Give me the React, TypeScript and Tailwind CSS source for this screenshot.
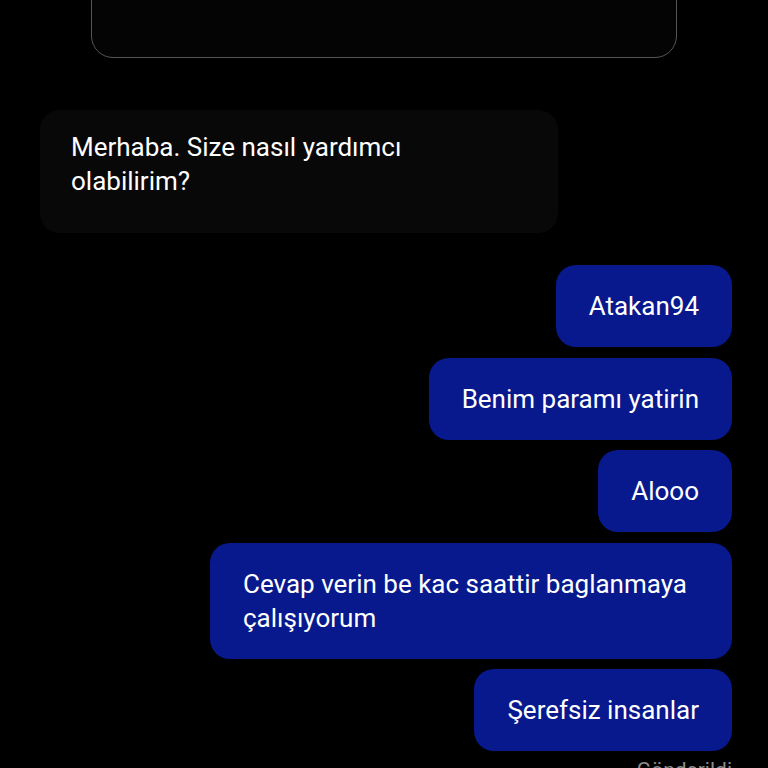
import React from 'react';

const outgoing = [
  'Atakan94',
  'Benim paramı yatirin',
  'Alooo',
  'Cevap verin be kac saattir baglanmaya çalışıyorum',
  'Şerefsiz insanlar',
];

export default function App() {
  return (
    <div
      className="h-[768px] w-[768px] overflow-hidden bg-black text-white"
      style={{ fontFamily: 'Roboto, "Noto Sans", sans-serif' }}
    >
      {/* card above the chat, cut off by the top edge */}
      <div className="mx-[91px] mt-[-40px] h-[98px] rounded-[22px] border-[1.5px] border-[#555555] bg-[#040404]" />

      <div className="flex flex-col pl-[40px] pr-[36px] pt-[52px]">
        <div className="w-[518px] rounded-[20px] bg-[#080808] pb-[35px] pl-[31px] pr-[40px] pt-[20px] text-[26px] leading-[34px]">
          Merhaba. Size nasıl yardımcı olabilirim?
        </div>

        <div className="mt-[32px] flex flex-col items-end gap-[10.5px]">
          {outgoing.map((m) => (
            <div
              key={m}
              className="max-w-[522px] rounded-[20px] bg-[#07198d] px-[33px] py-[24px] text-[26px] leading-[34px]"
            >
              {m}
            </div>
          ))}
          <div className="mt-[-4px] text-[21px] leading-[24px] text-[#8c8c8c]">Gönderildi</div>
        </div>
      </div>
    </div>
  );
}
